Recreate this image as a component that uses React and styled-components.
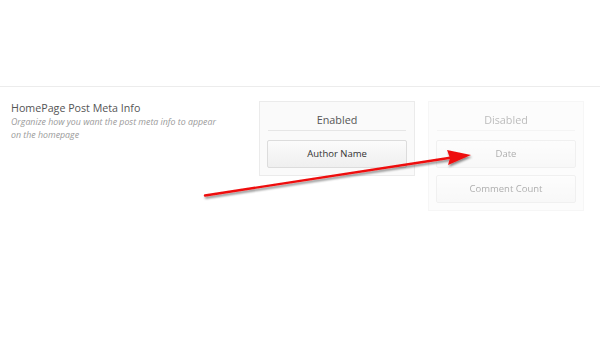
import React from "react";
import styled, { createGlobalStyle } from "styled-components";

const GlobalStyle = createGlobalStyle`
  body {
    margin: 0;
    background: #fff;
    font-family: "Open Sans", "Noto Sans", sans-serif;
  }
`;

const Page = styled.div`
  position: relative;
  width: 600px;
  height: 350px;
  overflow: hidden;
`;

const Section = styled.div`
  margin-top: 86px;
  border-top: 1px solid #ececec;
  display: flex;
  padding: 14px 0 0 11px;
`;

const Info = styled.div`
  width: 248px;
`;

const Title = styled.div`
  font-size: 10.7px;
  color: #555;
  line-height: 15px;
`;

const Desc = styled.div`
  font-size: 8.8px;
  font-style: italic;
  color: #9a9a9a;
  line-height: 13px;
  width: 206px;
`;

const Lists = styled.div`
  display: flex;
  gap: 13px;
`;

const Box = styled.div`
  width: 140px;
  padding: 0 7px 7px;
  background: #fafafa;
  border: 1px solid #ebebeb;
  opacity: ${(p) => (p.$faded ? 0.4 : 1)};
  align-self: flex-start;
`;

const BoxHead = styled.div`
  height: 20px;
  padding-top: 8px;
  line-height: 20px;
  text-align: center;
  font-size: 10.8px;
  color: #555;
  border-bottom: 1px solid #e6e6e6;
  margin: 0 1px 9px;
`;

const Items = styled.div`
  display: flex;
  flex-direction: column;
  gap: 7px;
`;

const Item = styled.div`
  height: 26px;
  line-height: 26px;
  text-align: center;
  font-size: 9.5px;
  color: #333;
  background: linear-gradient(#fbfbfb, #efefef);
  border: 1px solid #dcdcdc;
  border-radius: 2px;
`;

const Arrow = styled.svg`
  position: absolute;
  left: 0;
  top: 0;
`;

export default function App() {
  return (
    <Page>
      <GlobalStyle />
      <Section>
        <Info>
          <Title>HomePage Post Meta Info</Title>
          <Desc>Organize how you want the post meta info to appear on the homepage</Desc>
        </Info>
        <Lists>
          <Box>
            <BoxHead>Enabled</BoxHead>
            <Items>
              <Item>Author Name</Item>
            </Items>
          </Box>
          <Box $faded>
            <BoxHead>Disabled</BoxHead>
            <Items>
              <Item>Date</Item>
              <Item>Comment Count</Item>
            </Items>
          </Box>
        </Lists>
      </Section>
      <Arrow width="600" height="350">
        <defs>
          <filter id="sh" x="-10%" y="-50%" width="120%" height="200%">
            <feDropShadow dx="1" dy="2" stdDeviation="1.2" floodColor="#000" floodOpacity="0.45" />
          </filter>
        </defs>
        <g filter="url(#sh)">
          <path d="M205 195.5 L452 157.5" stroke="#ee1111" strokeWidth="2.4" strokeLinecap="round" fill="none" />
          <path d="M471 155 L447 150 L450 158 L448 165 Z" fill="#ee1111" />
        </g>
      </Arrow>
    </Page>
  );
}
